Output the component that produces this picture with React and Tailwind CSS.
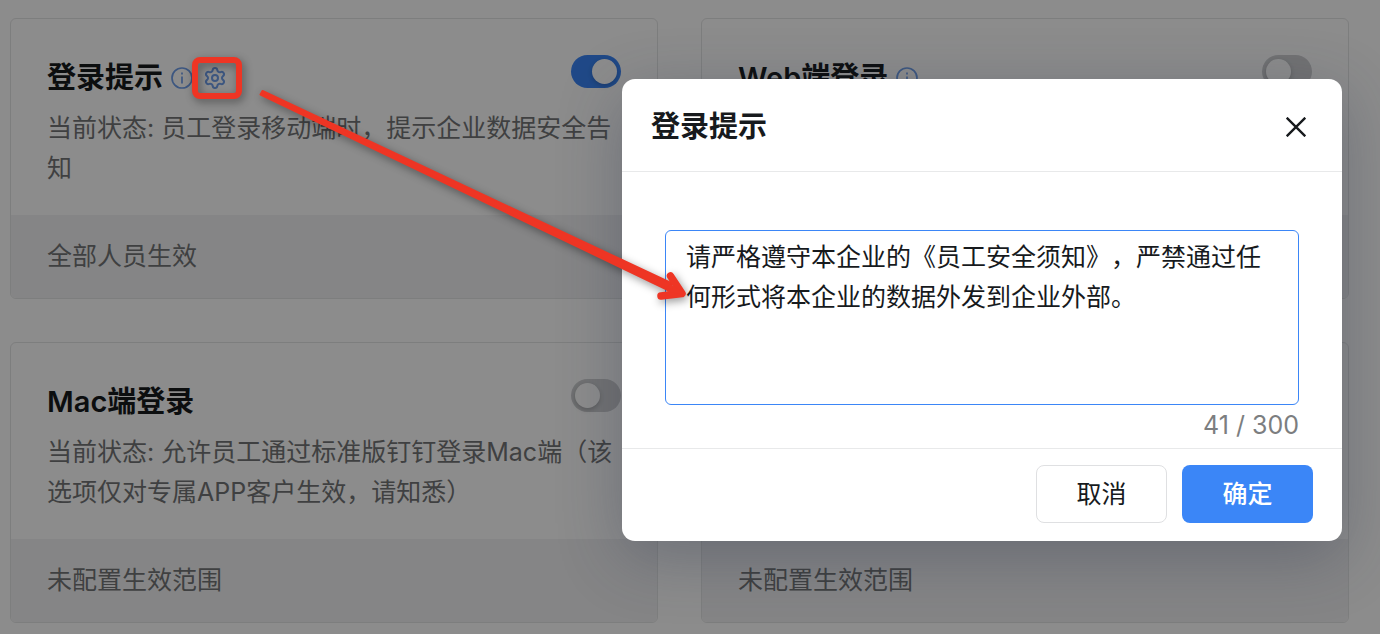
import { useState } from 'react';
import { Settings } from 'lucide-react';

const cards = [
  {
    id: 'tip',
    title: '登录提示',
    info: true,
    settings: true,
    enabled: true,
    desc: '当前状态: 员工登录移动端时，提示企业数据安全告知',
    scope: '全部人员生效',
  },
  { id: 'web', title: 'Web端登录', info: true, enabled: false },
  {
    id: 'mac',
    title: 'Mac端登录',
    enabled: false,
    desc: '当前状态: 允许员工通过标准版钉钉登录Mac端（该选项仅对专属APP客户生效，请知悉）',
    scope: '未配置生效范围',
  },
  { id: 'other', scope: '未配置生效范围' },
];

function InfoIcon() {
  return (
    <svg viewBox="0 0 22 22" className="w-[22px] h-[22px]" fill="none" stroke="currentColor" strokeWidth="1.7">
      <circle cx="11" cy="11" r="10" />
      <path d="M11 9.5V16.5" />
      <path d="M11 5.6V7.6" />
    </svg>
  );
}

function Switch({ label, defaultChecked }) {
  return (
    <input
      type="checkbox"
      role="switch"
      aria-label={label}
      defaultChecked={defaultChecked}
      className="appearance-none shrink-0 w-[50px] h-[33px] rounded-full p-1 flex items-center bg-[#cfd0d2] checked:bg-[#3b86f7] checked:justify-end before:content-[''] before:block before:w-[25px] before:h-[25px] before:rounded-full before:bg-white before:shadow-[0_2px_5px_rgba(0,0,0,0.2)] cursor-pointer"
    />
  );
}

function SettingCard({ card }) {
  return (
    <section className="flex flex-col border border-[#e4e5e6] rounded-md overflow-hidden bg-white">
      <div className="flex-1 px-9 pt-9 pb-[27px]">
        {card.title && (
          <div className="flex items-start justify-between">
            <div className="flex items-center gap-2">
              <h2 className="text-[29px] leading-[46px] font-semibold text-[#171a1d]">{card.title}</h2>
              <div className="flex items-center gap-2.5 text-[#6f9eea]">
                {card.info && (
                  <button type="button" aria-label="说明" className="cursor-pointer">
                    <InfoIcon />
                  </button>
                )}
                {card.settings && (
                  <button type="button" aria-label="设置" className="cursor-pointer">
                    <Settings size={24} strokeWidth={2} />
                  </button>
                )}
              </div>
            </div>
            <Switch label={card.title} defaultChecked={card.enabled} />
          </div>
        )}
        {card.desc && <p className="mt-[7px] text-[25px] leading-10 text-[#747677]">{card.desc}</p>}
      </div>
      <div className="px-9 py-[21px] min-h-[83px] bg-[#f3f3f4] text-[25px] leading-10 text-[#747677]">
        {card.scope}
      </div>
    </section>
  );
}

function TipDialog() {
  const [text, setText] = useState('请严格遵守本企业的《员工安全须知》，严禁通过任何形式将本企业的数据外发到企业外部。');

  return (
    <div
      role="dialog"
      aria-labelledby="dialog-title"
      className="w-[720px] bg-white rounded-[13px] shadow-[0_16px_64px_rgba(40,50,75,0.32)]"
    >
      <header className="flex items-center justify-between pl-[29px] pr-9 pt-[25px] pb-[21px] border-b border-[#e8e9ea]">
        <h2 id="dialog-title" className="text-[29px] leading-[46px] font-semibold text-[#171a1d]">登录提示</h2>
        <button type="button" aria-label="关闭" className="text-[#171a1d] cursor-pointer">
          <svg viewBox="0 0 20 20" className="w-5 h-5" stroke="currentColor" strokeWidth="2.4">
            <path d="M.7.7 19.3 19.3M19.3.7.7 19.3" />
          </svg>
        </button>
      </header>

      <div className="px-[43px] pt-[58px]">
        <textarea
          aria-label="提示内容"
          maxLength={300}
          value={text}
          onChange={(e) => setText(e.target.value)}
          className="block w-full h-[175px] px-5 py-1.5 border border-[#3b86f7] rounded-md resize-none outline-none text-[25px] leading-10 text-[#171a1d]"
        />
        <p className="text-right text-[25px] leading-10 pb-[3px] text-[#7c7e80]">{text.length} / 300</p>
      </div>

      <footer className="flex justify-end gap-[15px] px-[29px] pt-4 pb-[18px] border-t border-[#e8e9ea]">
        <button type="button" className="w-[131px] h-[58px] pt-0.5 rounded-lg border border-[#dfe0e2] text-[25px] text-[#171a1d] cursor-pointer">
          取消
        </button>
        <button type="button" className="w-[131px] h-[58px] pt-0.5 rounded-lg bg-[#3b86f7] text-[25px] font-medium text-white cursor-pointer">
          确定
        </button>
      </footer>
    </div>
  );
}

// Red box round the settings button and the arrow that leads to the dialog
function Annotation() {
  return (
    <svg
      aria-hidden="true"
      className="absolute left-0 top-0 w-[720px] h-[320px] z-20 pointer-events-none drop-shadow-[2px_3px_4px_rgba(0,0,0,0.4)]"
      viewBox="0 0 720 320"
      fill="none"
      stroke="#ee3524"
      strokeLinecap="round"
      strokeLinejoin="round"
    >
      <rect x="195" y="60" width="44" height="36" rx="5" strokeWidth="6" />
      <path d="M262.500 91 672 283.500 669 290.500 260.500 94.500Z" fill="#ee3524" strokeWidth="2" />
      <path d="M670.5 276 682 293.500 661 296" strokeWidth="7.500" />
      <path d="M670 286 682 293 668 290Z" fill="#ee3524" strokeWidth="3" />
    </svg>
  );
}

export default function App() {
  return (
    <div className="relative min-h-screen bg-white font-['Inter','Noto_Sans_CJK_SC',sans-serif] [text-spacing-trim:space-all]">
      <main className="grid grid-cols-2 auto-rows-fr gap-[43px] pl-2.5 pr-[31px] pt-[18px] pb-[11px]">
        {cards.map((card) => (
          <SettingCard key={card.id} card={card} />
        ))}
      </main>

      <div className="absolute inset-0 z-10 flex items-start justify-end pt-[79px] pr-[38px] bg-black/45 overflow-hidden">
        <TipDialog />
      </div>

      <Annotation />
    </div>
  );
}
